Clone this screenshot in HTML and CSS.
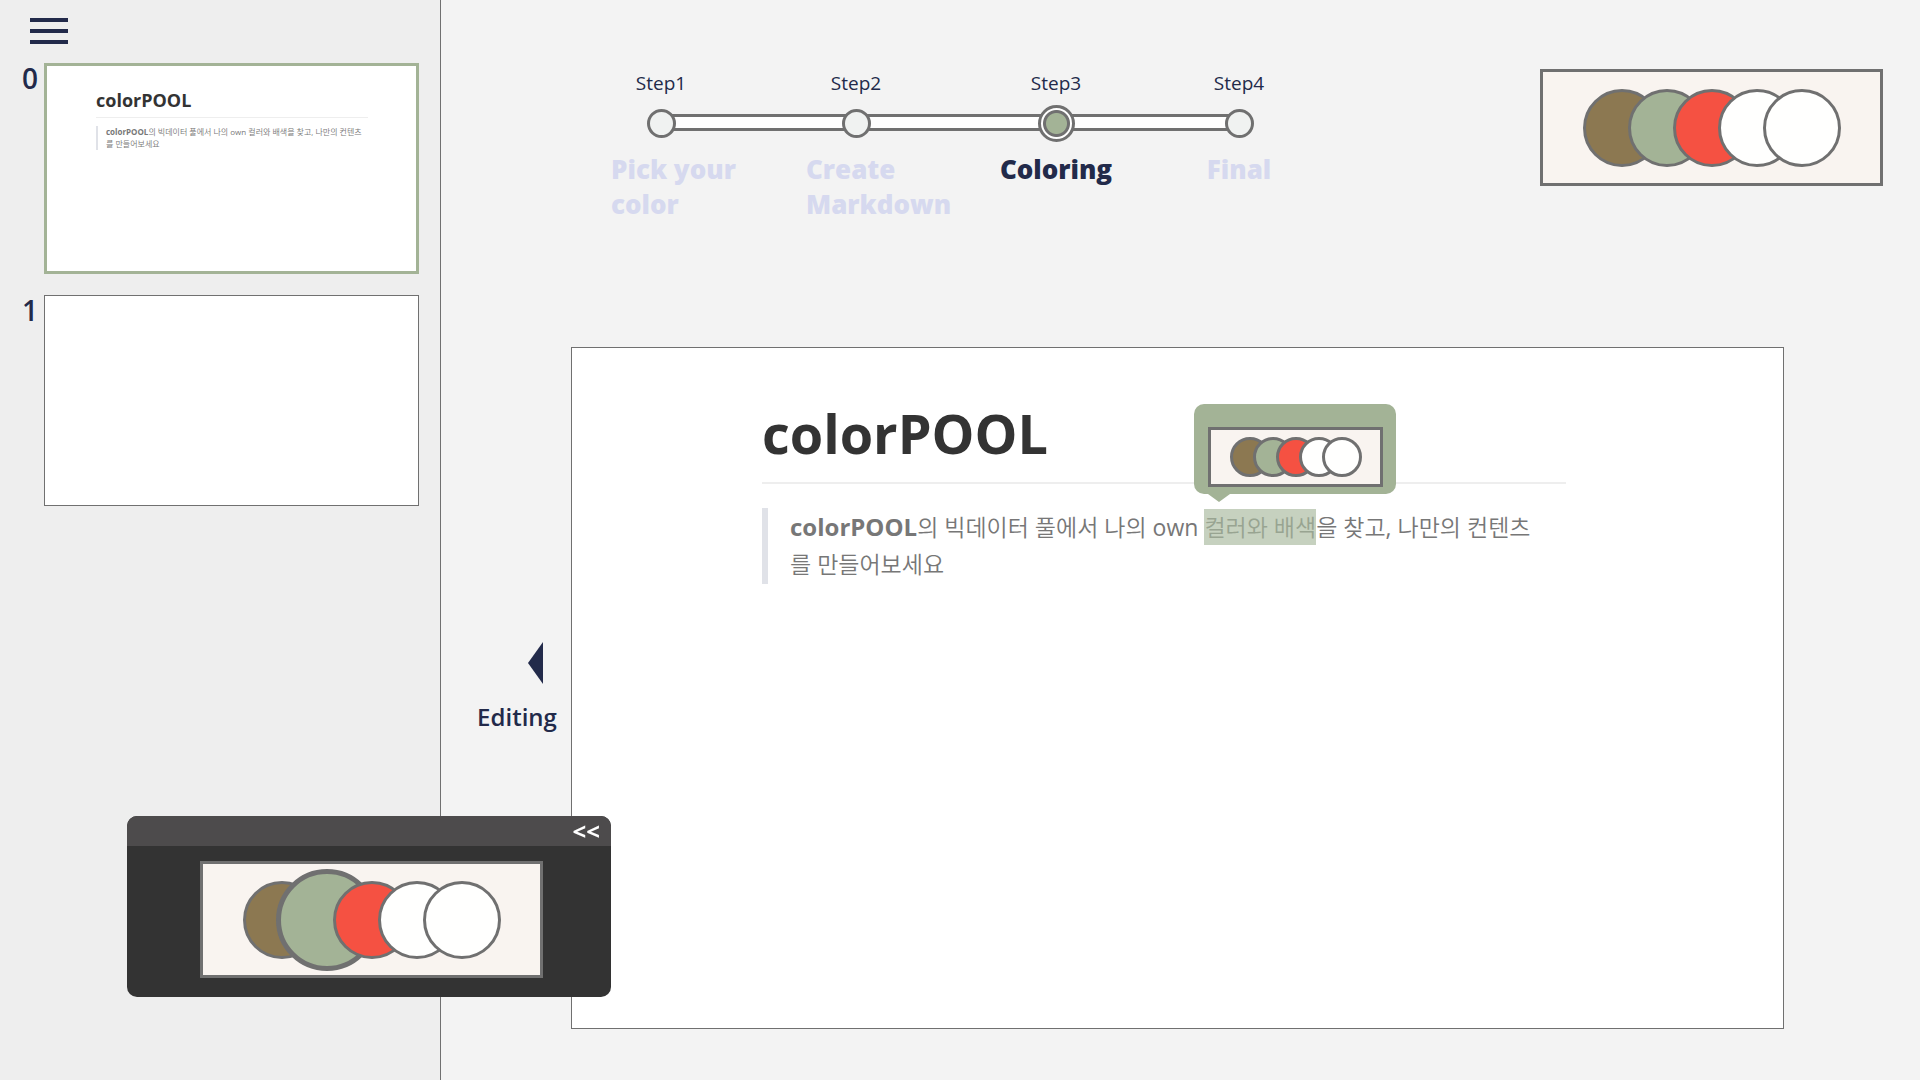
FILE: index.html
```html
<!DOCTYPE html>
<html lang="ko">
<head>
<meta charset="utf-8">
<meta name="viewport" content="width=device-width, initial-scale=1">
<title>colorPOOL</title>
<link rel="stylesheet" href="styles.css">
</head>
<body>
<div class="app">
  <aside class="sidebar">
    <button class="menu" type="button" aria-label="Menu"><span></span><span></span><span></span></button>
    <ol class="thumbs">
      <li class="thumb-row">
        <span class="thumb-no">0</span>
        <div class="thumb thumb-active">
          <h2 class="thumb-title">colorPOOL</h2>
          <blockquote class="thumb-quote"><strong>colorPOOL</strong>의 빅데이터 풀에서 나의 own 컬러와 배색을 찾고, 나만의 컨텐츠<br>를 만들어보세요</blockquote>
        </div>
      </li>
      <li class="thumb-row">
        <span class="thumb-no">1</span>
        <div class="thumb"></div>
      </li>
    </ol>
  </aside>

  <main class="main">
    <header class="top">
      <ol class="steps">
        <li class="step"><span class="step-no">Step1</span><span class="dot"></span><span class="step-name">Pick your<br>color</span></li>
        <li class="step"><span class="step-no">Step2</span><span class="dot"></span><span class="step-name">Create<br>Markdown</span></li>
        <li class="step step-current" aria-current="step"><span class="step-no">Step3</span><span class="dot"></span><span class="step-name">Coloring</span></li>
        <li class="step step-last"><span class="step-no">Step4</span><span class="dot"></span><span class="step-name">Final</span></li>
      </ol>
      <div class="palette">
        <span class="swatch brown"></span><span class="swatch green"></span><span class="swatch red"></span><span class="swatch white"></span><span class="swatch white"></span>
      </div>
    </header>

    <section class="stage">
      <button class="back" type="button">
        <svg class="back-icon" viewBox="0 0 15 42" aria-hidden="true"><path d="M15 0V42L0 21Z"/></svg>
        <span>Editing</span>
      </button>
      <article class="slide">
        <h1 class="slide-title">colorPOOL</h1>
        <blockquote class="slide-quote"><strong>colorPOOL</strong>의 빅데이터 풀에서 나의 own <span class="picked"><mark>컬러와 배색</mark><span class="bubble"><span class="palette palette-small"><span class="swatch brown"></span><span class="swatch green"></span><span class="swatch red"></span><span class="swatch white"></span><span class="swatch white"></span></span></span></span>을 찾고, 나만의 컨텐츠<br>를 만들어보세요</blockquote>
      </article>
    </section>
  </main>
</div>

<section class="panel" aria-label="Palette">
  <div class="panel-bar"><button class="panel-fold" type="button">&lt;&lt;</button></div>
  <div class="panel-body">
    <div class="palette">
      <button class="swatch brown" type="button" aria-label="Brown"></button>
      <button class="swatch green swatch-chosen" type="button" aria-label="Green"></button>
      <button class="swatch red" type="button" aria-label="Red"></button>
      <button class="swatch white" type="button" aria-label="White"></button>
      <button class="swatch white" type="button" aria-label="White"></button>
    </div>
  </div>
</section>
</body>
</html>
```
FILE: styles.css
```css
*, *::before { box-sizing: border-box; }

:root {
  --navy: #222a4a;
  --line: #707070;
  --green: #a3b396;
}

body {
  margin: 0;
  background: #f3f3f3;
  color: var(--navy);
  font-family: "Open Sans", "Noto Sans CJK KR DemiLight", "Noto Sans CJK KR", sans-serif;
}

button {
  margin: 0;
  padding: 0;
  border: 0;
  background: none;
  color: inherit;
  font: inherit;
  cursor: pointer;
}

ol { margin: 0; padding: 0; list-style: none; }

.app { display: flex; min-height: 100vh; }

/* Sidebar */
.sidebar {
  flex: 0 0 441px;
  padding: 18px 21px 0 22px;
  border-right: 1px solid var(--line);
  background: #eee;
}

.menu {
  display: flex;
  flex-direction: column;
  gap: 7px;
  width: 38px;
  height: 27px;
  margin: 0 0 18px 8px;
}
.menu span { height: 4px; background: var(--navy); }

.thumbs { display: flex; flex-direction: column; gap: 21px; }
.thumb-row { display: flex; }
.thumb-no {
  flex: 0 0 22px;
  font-size: 28px;
  font-weight: 600;
  line-height: 30px;
}
.thumb {
  flex: 1;
  min-width: 0;
  aspect-ratio: 16 / 9;
  border: 1px solid var(--line);
  background: #fff;
}
.thumb-active { padding: 22px 48px 0 49px; border: 3px solid var(--green); }
.thumb-title {
  margin: 0 0 8px;
  padding-bottom: 4px;
  border-bottom: 1px solid #eee;
  color: #333;
  font-size: 18px;
  line-height: 25px;
}
.thumb-quote {
  margin: 0;
  padding-left: 8px;
  border-left: 2px solid #e0e2e8;
  color: #777;
  font-size: 8px;
  line-height: 12px;
  white-space: nowrap;
}

/* Header */
.main { flex: 1; min-width: 0; }
.top {
  display: flex;
  justify-content: space-between;
  align-items: flex-start;
  padding: 69px 37px 0 170px;
}

.steps {
  position: relative;
  display: grid;
  grid-template-columns: 195px 200px 183px 100px;
  min-height: 278px;
}
.steps::before {
  content: "";
  position: absolute;
  top: 45px;
  left: 50px;
  right: 50px;
  height: 17px;
  border: 3px solid var(--line);
  background: #fff;
}
.step {
  position: relative;
  display: flex;
  flex-direction: column;
  align-items: center;
  width: 100px;
}
.step-no { font-size: 19px; font-weight: 500; line-height: 28px; }
.dot {
  width: 29px;
  height: 29px;
  margin: 12px 0 14px;
  border: 3px solid var(--line);
  border-radius: 50%;
  background: #f0f2f1;
}
.step-name {
  align-self: flex-start;
  color: #d6d9ef;
  font-size: 26px;
  font-weight: 800;
  line-height: 35px;
  white-space: nowrap;
}
.step-current .dot {
  width: 37px;
  height: 37px;
  margin: 8px 0 10px;
  background: radial-gradient(circle, var(--green) 10px, var(--line) 11px, var(--line) 13px, #fff 14px);
}
.step-current .step-name { align-self: center; color: var(--navy); }
.step-last .step-name { align-self: center; }

/* Palette */
.palette {
  display: flex;
  justify-content: center;
  align-items: center;
  width: 343px;
  height: 117px;
  border: 3px solid var(--line);
  background: #f9f4f0;
}
.swatch {
  flex: none;
  width: 78px;
  height: 78px;
  border: 3px solid var(--line);
  border-radius: 50%;
}
.swatch + .swatch { margin-left: -33px; }
.brown { background: #8c7851; }
.green { background: var(--green); }
.red { background: #f55142; }
.white { background: #fffffe; }

.palette-small { width: 175px; height: 60px; }
.palette-small .swatch { width: 40px; height: 40px; }
.palette-small .swatch + .swatch { margin-left: -17px; }

/* Stage */
.stage {
  display: flex;
  align-items: center;
  gap: 12px;
  padding: 0 136px 50px 34px;
}
.back {
  display: flex;
  flex: 0 0 84px;
  flex-direction: column;
  align-items: center;
  gap: 16px;
  font-size: 24px;
  font-weight: 600;
  line-height: 34px;
}
.back-icon {
  align-self: flex-end;
  width: 15px;
  height: 42px;
  margin-right: 16px;
  fill: var(--navy);
}
.slide {
  flex: 1;
  min-width: 0;
  aspect-ratio: 16 / 9;
  padding: 50px 217px 0 190px;
  border: 1px solid var(--line);
  background: #fff;
}
.slide-title {
  margin: 0 0 24px;
  padding-bottom: 14px;
  border-bottom: 2px solid #eee;
  color: #333;
  font-size: 54px;
  line-height: 70px;
}
.slide-quote {
  margin: 0;
  padding: 0 0 1px 22px;
  border-left: 6px solid #e0e2e8;
  color: #777;
  font-size: 23px;
  line-height: 37px;
  white-space: nowrap;
}
.slide-quote strong { font-size: 24px; }
.picked { position: relative; }
mark { padding: 2px 0; background: #c6d1bf; color: #98a491; }

/* Colour bubble above the picked words */
.bubble {
  position: absolute;
  left: -10px;
  bottom: 49px;
  display: flex;
  padding: 23px 13px 7px 14px;
  border-radius: 10px;
  background: var(--green);
}
.bubble::after {
  content: "";
  position: absolute;
  top: 100%;
  left: 14px;
  border: 11px solid transparent;
  border-top: 8px solid var(--green);
  border-bottom: 0;
}

/* Floating panel */
.panel {
  position: fixed;
  left: 127px;
  bottom: 83px;
  width: 484px;
  border-radius: 10px;
  background: #333;
}
.panel-bar {
  display: flex;
  justify-content: flex-end;
  height: 30px;
  padding-right: 11px;
  border-radius: 10px 10px 0 0;
  background: #4d4b4c;
}
.panel-fold {
  color: #fff;
  font-size: 24px;
  font-weight: 700;
  line-height: 30px;
}
.panel-body {
  display: flex;
  justify-content: center;
  padding: 15px 0 19px 5px;
}
.swatch-chosen {
  width: 102px;
  height: 102px;
  border-width: 5px;
}
.swatch + .swatch-chosen { margin-left: -45px; margin-right: -12px; }
```
